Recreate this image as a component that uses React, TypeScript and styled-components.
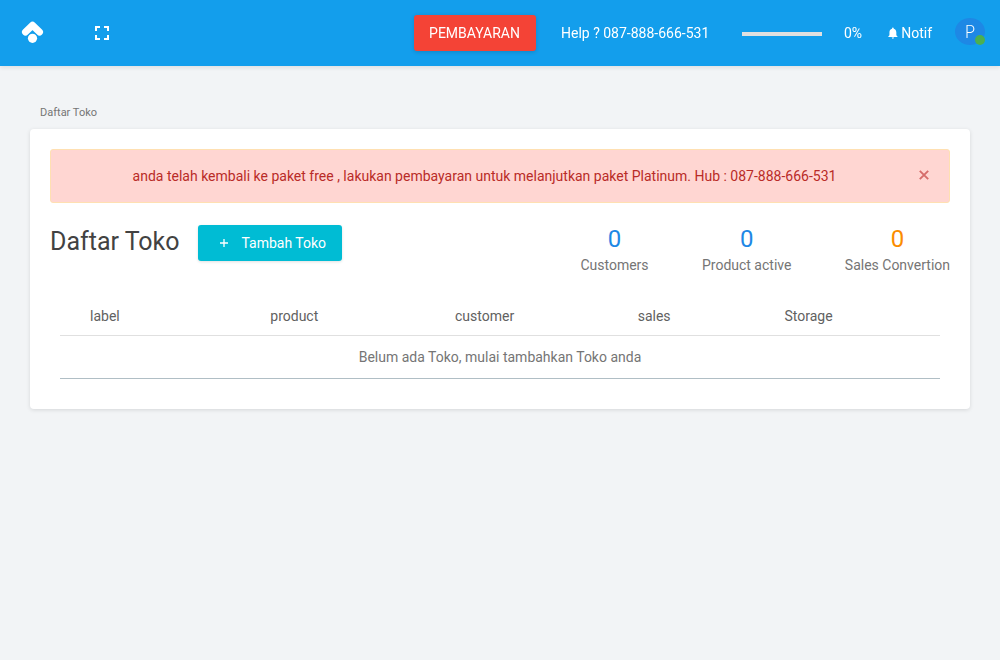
import React from 'react';
import styled, { createGlobalStyle } from 'styled-components';
import { MdFullscreen, MdNotifications } from 'react-icons/md';

const GlobalStyle = createGlobalStyle`
  *, *::before, *::after { box-sizing: border-box; }
  body {
    margin: 0;
    min-height: 100vh;
    background: #f2f4f6;
    color: #757575;
    font: 400 14px/22px Roboto, sans-serif;
  }
  h1, p { margin: 0; }
  button { font: inherit; border: 0; padding: 0; cursor: pointer; }
`;

const Header = styled.header`
  display: flex;
  align-items: center;
  height: 66px;
  padding: 0 15px 0 20px;
  background: #139eec;
  color: #fff;
  box-shadow: 0 2px 4px rgba(0, 0, 0, 0.08);
  will-change: transform;
`;

const Logo = styled.svg`
  display: block;
  width: 24px;
  height: 24px;
`;

const FullscreenButton = styled.button`
  display: flex;
  margin-left: 46px;
  background: none;
  color: #fff;
`;

const PayButton = styled.button`
  width: 122px;
  height: 36px;
  margin-left: auto;
  padding-right: 1px;
  border-radius: 3px;
  background: #f44336;
  color: #fff;
  box-shadow: 0 1px 4px rgba(0, 0, 0, 0.16);
`;

const HelpText = styled.span`
  width: 147px;
  margin-left: 25px;
  white-space: nowrap;
`;

const Quota = styled.div`
  display: flex;
  align-items: center;
  gap: 22px;
  margin-left: 34px;
`;

const QuotaTrack = styled.div`
  width: 80px;
  height: 4px;
  margin-top: 2px;
  background: #e0e0e0;
`;

const QuotaValue = styled.span`
  width: 18px;
  white-space: nowrap;
`;

const NotifButton = styled.button`
  display: flex;
  align-items: center;
  gap: 1.4px;
  width: 47px;
  margin-left: 23px;
  padding-left: 1px;
  background: none;
  color: #fff;
`;

const Avatar = styled.div`
  position: relative;
  width: 30px;
  height: 27px;
  margin: -3px 0 0 23px;
  border-radius: 50%;
  background: #1e88e5;
  font-family: 'Open Sans', sans-serif;
  font-size: 18px;
  font-weight: 300;
  line-height: 27px;
  text-align: center;
`;

const OnlineDot = styled.i`
  position: absolute;
  right: 0;
  bottom: 0;
  width: 10px;
  height: 10px;
  border-radius: 50%;
  background: #4caf50;
`;

const Page = styled.main`
  padding: 36px 30px 0;
`;

const Breadcrumb = styled.div`
  height: 27px;
  padding-left: 10px;
  font-size: 11px;
  line-height: 22px;
`;

const Card = styled.section`
  height: 280px;
  padding: 20px 20px 0;
  border-radius: 4px;
  background: #fff;
  box-shadow: 0 1px 4px rgba(0, 0, 0, 0.12);
`;

const Alert = styled.div`
  display: flex;
  align-items: center;
  height: 54px;
  padding: 0 20px 0 15px;
  border: 1px solid #ffe0b2;
  border-radius: 3px;
  background: #ffd6d2;
  color: #b92b27;
`;

const AlertText = styled.p`
  flex: 1;
  padding-right: 16px;
  text-align: center;
`;

const CloseButton = styled.button`
  display: flex;
  margin-top: -2px;
  background: none;
  color: #d66c6a;
`;

const Summary = styled.div`
  display: flex;
  align-items: flex-start;
  height: 72px;
  margin-top: 22px;
`;

const Title = styled.h1`
  width: 130px;
  color: #424242;
  font-size: 25px;
  font-weight: 400;
  line-height: 34px;
  white-space: nowrap;
`;

const AddButton = styled.button`
  display: flex;
  align-items: center;
  gap: 13.5px;
  width: 144px;
  height: 36px;
  margin-left: 18px;
  padding-left: 22px;
  border-radius: 3px;
  background: #00bcd4;
  color: #fff;
  box-shadow: 0 1px 3px rgba(0, 0, 0, 0.12);
`;

const Stats = styled.div`
  display: flex;
  gap: 53.4px;
  margin-left: auto;
`;

const Stat = styled.div`
  text-align: center;
  line-height: 22px;
`;

const StatValue = styled.div<{ $color: string }>`
  color: ${(p) => p.$color};
  font-size: 24px;
  line-height: 29px;
`;

const StoreTable = styled.div`
  padding: 0 10px;
`;

const HeadRow = styled.div`
  display: grid;
  grid-template-columns: 180.3px 184.7px 182.7px 146.8px 1fr;
  height: 39px;
  border-bottom: 1px solid #e0e0e0;
  color: #616161;
  line-height: 38px;
`;

const HeadCell = styled.div`
  padding-left: 30px;
`;

const EmptyRow = styled.div`
  height: 43px;
  border-bottom: 1px solid #b0bec5;
  line-height: 42px;
  text-align: center;
`;

const stats = [
  { value: 0, label: 'Customers', color: '#1e88e5' },
  { value: 0, label: 'Product active', color: '#1e88e5' },
  { value: 0, label: 'Sales Convertion', color: '#fb8c00' },
];

const columns = ['label', 'product', 'customer', 'sales', 'Storage'];

export default function App() {
  return (
    <>
      <GlobalStyle />
      <Header>
        <Logo viewBox="0 0 24 24">
          <path d="M5.5 11 12.5 4.2 19.5 11" fill="none" stroke="#fff" strokeWidth="7" strokeLinecap="round" strokeLinejoin="round" />
          <circle cx="12.5" cy="17.3" r="5.5" fill="#139eec" />
          <circle cx="12.5" cy="17.3" r="4.6" fill="#fff" />
        </Logo>
        <FullscreenButton aria-label="Fullscreen"><MdFullscreen size={24} /></FullscreenButton>
        <PayButton>PEMBAYARAN</PayButton>
        <HelpText>Help ? 087-888-666-531</HelpText>
        <Quota>
          <QuotaTrack />
          <QuotaValue>0%</QuotaValue>
        </Quota>
        <NotifButton><MdNotifications size={14} />Notif</NotifButton>
        <Avatar>P<OnlineDot /></Avatar>
      </Header>
      <Page>
        <Breadcrumb>Daftar Toko</Breadcrumb>
        <Card>
          <Alert>
            <AlertText>
              anda telah kembali ke paket free , lakukan pembayaran untuk melanjutkan paket Platinum. Hub : 087-888-666-531
            </AlertText>
            <CloseButton aria-label="Close">
              <svg width="10" height="10" viewBox="0 0 10 10">
                <path d="M.8.8l8.4 8.4M9.2.8L.8 9.2" stroke="currentColor" strokeWidth="1.9" />
              </svg>
            </CloseButton>
          </Alert>
          <Summary>
            <Title>Daftar Toko</Title>
            <AddButton>
              <svg width="8" height="8" viewBox="0 0 8 8">
                <path d="M4 0v8M0 4h8" stroke="currentColor" strokeWidth="1.3" />
              </svg>
              Tambah Toko
            </AddButton>
            <Stats>
              {stats.map((s) => (
                <Stat key={s.label}>
                  <StatValue $color={s.color}>{s.value}</StatValue>
                  {s.label}
                </Stat>
              ))}
            </Stats>
          </Summary>
          <StoreTable>
            <HeadRow>
              {columns.map((c) => <HeadCell key={c}>{c}</HeadCell>)}
            </HeadRow>
            <EmptyRow>Belum ada Toko, mulai tambahkan Toko anda</EmptyRow>
          </StoreTable>
        </Card>
      </Page>
    </>
  );
}
